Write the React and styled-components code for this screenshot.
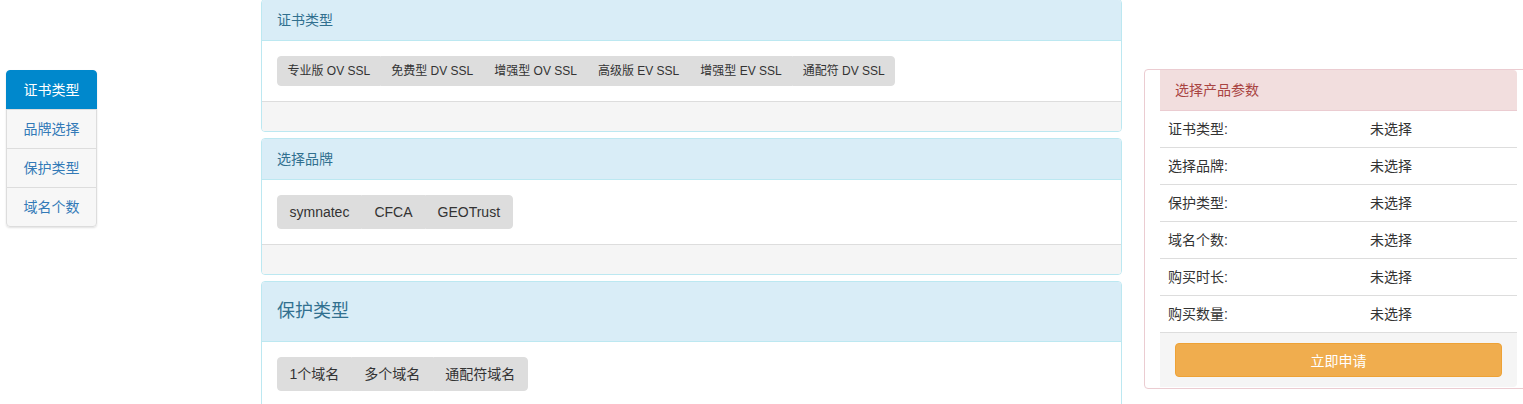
import React from 'react';
import styled, { createGlobalStyle } from 'styled-components';

const GlobalStyle = createGlobalStyle`
  body {
    margin: 0;
    overflow: hidden;
    background: #fff;
    font-family: "Liberation Sans", "Noto Sans CJK SC", sans-serif;
    font-size: 14px;
    color: #333;
  }
`;

const Page = styled.div`
  display: flex;
  align-items: flex-start;
  width: 1560px;
`;

const Side = styled.div`
  width: 255px;
  padding: 70px 0 0 6px;
`;

const Nav = styled.ul`
  width: 91px;
  margin: 0;
  padding: 0;
  list-style: none;
  border-radius: 4px;
  box-shadow: 0 1px 2px rgba(0, 0, 0, 0.12);
`;

const NavItem = styled.li`
  height: 38px;
  line-height: 38px;
  text-align: center;
  font-size: 14px;
  color: ${p => (p.active ? '#fff' : '#337ab7')};
  background: ${p => (p.active ? '#0088cc' : '#f7f7f7')};
  border: 1px solid ${p => (p.active ? '#0088cc' : '#ddd')};
  margin-top: -1px;

  &:first-child {
    margin-top: 0;
    border-radius: 4px 4px 0 0;
  }
  &:last-child {
    border-radius: 0 0 4px 4px;
  }
`;

const Main = styled.div`
  width: 861px;
  margin-top: -1px;
  display: flex;
  flex-direction: column;
  gap: 6px;
`;

const Panel = styled.div`
  border: 1px solid #bce8f1;
  border-radius: 4px;
  background: #fff;
  overflow: hidden;
`;

const Heading = styled.div`
  background: #d9edf7;
  color: #31708f;
  border-bottom: 1px solid #bce8f1;
  padding: ${p => (p.large ? '20px 15px' : '10px 15px')};
  font-size: ${p => (p.large ? '18px' : '14px')};
  line-height: ${p => (p.large ? '19px' : '20px')};
`;

const Body = styled.div`
  padding: 15px;
`;

const Footer = styled.div`
  height: 29px;
  background: #f5f5f5;
  border-top: 1px solid #ddd;
`;

const Group = styled.div`
  display: inline-flex;
`;

const Tag = styled.span`
  background: #ddd;
  border: 1px solid #ddd;
  color: #333;
  font-size: ${p => (p.small ? '12px' : '14px')};
  line-height: ${p => (p.small ? '18px' : '20px')};
  padding: ${p => (p.small ? '5px 9.5px' : '6px 11.5px')};
  white-space: nowrap;

  &:first-child {
    border-radius: 4px 0 0 4px;
  }
  &:last-child {
    border-radius: 0 4px 4px 0;
  }
`;

const Aside = styled.div`
  margin: 69px 0 0 22px;
  width: 386px;
  padding: 0 12px 1px 15px;
  border: 1px solid #ebccd1;
  border-radius: 4px;
  box-sizing: border-box;
`;

const Summary = styled.div`
  width: 357px;
  border-radius: 0 4px 4px 0;
  overflow: hidden;
`;

const SummaryHead = styled.div`
  background: #f2dede;
  color: #a94442;
  border-bottom: 1px solid #ebccd1;
  padding: 10px 15px;
  line-height: 20px;
  font-size: 14px;
`;

const Row = styled.div`
  display: grid;
  grid-template-columns: 202px 1fr;
  border-bottom: 1px solid #ddd;
  line-height: 20px;
  padding: 8px 0;
  color: #333;

  & > span {
    padding: 0 8px;
  }
`;

const SummaryFoot = styled.div`
  background: #f5f5f5;
  padding: 10px 15px;
`;

const ApplyButton = styled.button`
  display: block;
  width: 100%;
  height: 34px;
  background: #f0ad4e;
  border: 1px solid #eea236;
  border-radius: 4px;
  color: #fff;
  font-family: inherit;
  font-size: 14px;
`;

const certTypes = ['专业版 OV SSL', '免费型 DV SSL', '增强型 OV SSL', '高级版 EV SSL', '增强型 EV SSL', '通配符 DV SSL'];
const brands = ['symnatec', 'CFCA', 'GEOTrust'];
const protections = ['1个域名', '多个域名', '通配符域名'];
const params = ['证书类型:', '选择品牌:', '保护类型:', '域名个数:', '购买时长:', '购买数量:'];

export default function App() {
  return (
    <>
      <GlobalStyle />
      <Page>
        <Side>
          <Nav>
            <NavItem active>证书类型</NavItem>
            <NavItem>品牌选择</NavItem>
            <NavItem>保护类型</NavItem>
            <NavItem>域名个数</NavItem>
          </Nav>
        </Side>

        <Main>
          <Panel>
            <Heading>证书类型</Heading>
            <Body>
              <Group>
                {certTypes.map(t => <Tag small key={t}>{t}</Tag>)}
              </Group>
            </Body>
            <Footer />
          </Panel>

          <Panel>
            <Heading>选择品牌</Heading>
            <Body>
              <Group>
                {brands.map(t => <Tag key={t}>{t}</Tag>)}
              </Group>
            </Body>
            <Footer />
          </Panel>

          <Panel>
            <Heading large>保护类型</Heading>
            <Body>
              <Group>
                {protections.map(t => <Tag key={t}>{t}</Tag>)}
              </Group>
            </Body>
            <Footer />
          </Panel>
        </Main>

        <Aside>
          <Summary>
            <SummaryHead>选择产品参数</SummaryHead>
            {params.map(p => (
              <Row key={p}>
                <span>{p}</span>
                <span>未选择</span>
              </Row>
            ))}
            <SummaryFoot>
              <ApplyButton>立即申请</ApplyButton>
            </SummaryFoot>
          </Summary>
        </Aside>
      </Page>
    </>
  );
}
